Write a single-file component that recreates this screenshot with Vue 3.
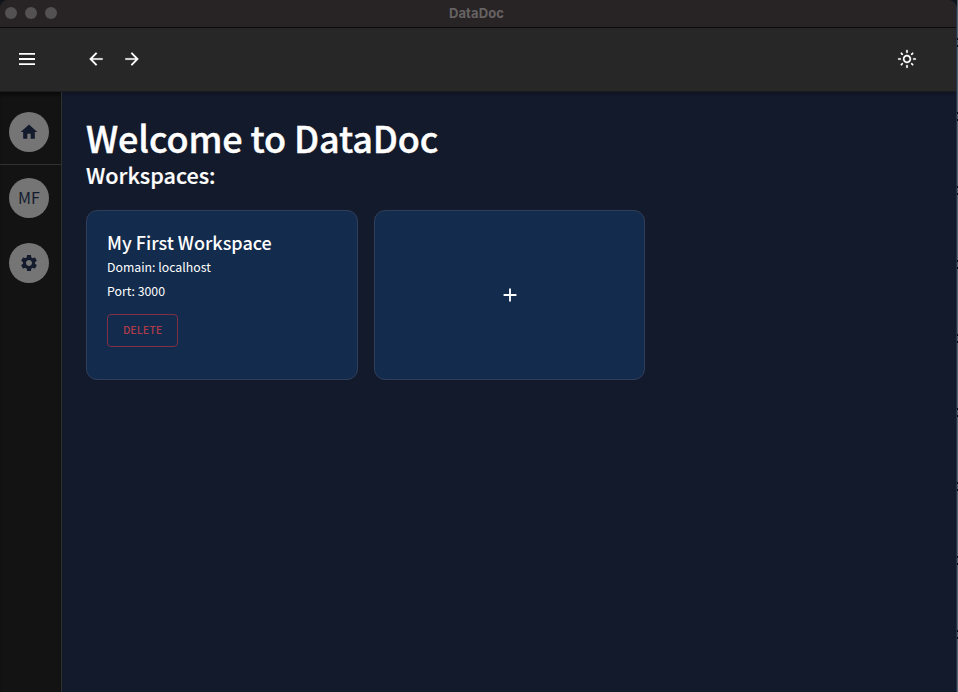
<script setup>
const workspaces = [{ name: 'My First Workspace', domain: 'localhost', port: 3000 }]
</script>

<template>
  <div class="desktop">
    <div class="window">
      <header class="titlebar">
        <div class="lights"><i></i><i></i><i></i></div>
        <span class="app-name">DataDoc</span>
      </header>
      <nav class="toolbar">
        <button class="icon-btn menu" aria-label="Menu">
          <svg viewBox="0 0 24 24" class="icon"><path d="M4 18h16v-1.7H4zm0-5.1h16v-1.8H4zM4 6v1.7h16V6z" /></svg>
        </button>
        <button class="icon-btn" aria-label="Back">
          <svg viewBox="0 0 24 24" class="icon"><path d="M20 11H7.83l5.59-5.59L12 4l-8 8 8 8 1.41-1.41L7.83 13H20z" /></svg>
        </button>
        <button class="icon-btn forward" aria-label="Forward">
          <svg viewBox="0 0 24 24" class="icon"><path d="m12 4-1.41 1.41L16.17 11H4v2h12.17l-5.58 5.59L12 20l8-8z" /></svg>
        </button>
        <button class="icon-btn theme" aria-label="Theme">
          <svg viewBox="0 0 24 24" class="icon"><path d="M12 9c1.65 0 3 1.35 3 3s-1.35 3-3 3-3-1.35-3-3 1.35-3 3-3m0-2c-2.76 0-5 2.24-5 5s2.24 5 5 5 5-2.24 5-5-2.24-5-5-5M2 13h2c.55 0 1-.45 1-1s-.45-1-1-1H2c-.55 0-1 .45-1 1s.45 1 1 1m18 0h2c.55 0 1-.45 1-1s-.45-1-1-1h-2c-.55 0-1 .45-1 1s.45 1 1 1M11 2v2c0 .55.45 1 1 1s1-.45 1-1V2c0-.55-.45-1-1-1s-1 .45-1 1m0 18v2c0 .55.45 1 1 1s1-.45 1-1v-2c0-.55-.45-1-1-1s-1 .45-1 1M5.99 4.58c-.39-.39-1.03-.39-1.41 0-.39.39-.39 1.03 0 1.41l1.06 1.06c.39.39 1.03.39 1.41 0s.39-1.03 0-1.41zm12.37 12.37c-.39-.39-1.03-.39-1.41 0-.39.39-.39 1.03 0 1.41l1.06 1.06c.39.39 1.03.39 1.41 0 .39-.39.39-1.03 0-1.41zm1.06-10.96c.39-.39.39-1.03 0-1.41-.39-.39-1.03-.39-1.41 0l-1.06 1.06c-.39.39-.39 1.03 0 1.41s1.03.39 1.41 0zM7.05 18.36c.39-.39.39-1.03 0-1.41-.39-.39-1.03-.39-1.41 0l-1.06 1.06c-.39.39-.39 1.03 0 1.41s1.03.39 1.41 0z" /></svg>
        </button>
      </nav>
      <div class="body">
        <aside class="sidebar">
          <div class="side-item home">
            <div class="avatar"><svg viewBox="0 0 24 24" class="glyph"><path d="M10 20v-6h4v6h5v-8h3L12 3 2 12h3v8z" /></svg></div>
          </div>
          <div class="side-item"><div class="avatar">MF</div></div>
          <div class="side-item">
            <div class="avatar"><svg viewBox="0 0 24 24" class="glyph"><path d="M19.14 12.94c.04-.3.06-.61.06-.94 0-.32-.02-.64-.07-.94l2.03-1.58c.18-.14.23-.41.12-.61l-1.92-3.32c-.12-.22-.37-.29-.59-.22l-2.39.96c-.5-.38-1.03-.7-1.62-.94l-.36-2.54c-.04-.24-.24-.41-.48-.41h-3.84c-.24 0-.43.17-.47.41l-.36 2.54c-.59.24-1.13.57-1.62.94l-2.39-.96c-.22-.08-.47 0-.59.22L2.74 8.87c-.12.21-.08.47.12.61l2.03 1.58c-.05.3-.09.63-.09.94s.02.64.07.94l-2.03 1.58c-.18.14-.23.41-.12.61l1.92 3.32c.12.22.37.29.59.22l2.39-.96c.5.38 1.03.7 1.62.94l.36 2.54c.05.24.24.41.48.41h3.84c.24 0 .44-.17.47-.41l.36-2.54c.59-.24 1.13-.56 1.62-.94l2.39.96c.22.08.47 0 .59-.22l1.92-3.32c.12-.22.07-.47-.12-.61zM12 15.6c-1.98 0-3.6-1.62-3.6-3.6s1.62-3.6 3.6-3.6 3.6 1.62 3.6 3.6-1.62 3.6-3.6 3.6" /></svg></div>
          </div>
        </aside>
        <main class="content">
          <h1>Welcome to DataDoc</h1>
          <h2>Workspaces:</h2>
          <section class="cards">
            <article v-for="w in workspaces" :key="w.name" class="card">
              <h3>{{ w.name }}</h3>
              <p>Domain: {{ w.domain }}</p>
              <p>Port: {{ w.port }}</p>
              <button class="delete">DELETE</button>
            </article>
            <article class="card add">
              <svg viewBox="0 0 24 24" class="plus"><path d="M19 13h-6v6h-2v-6H5v-2h6V5h2v6h6z" /></svg>
            </article>
          </section>
        </main>
      </div>
    </div>
    <div class="backdrop"></div>
  </div>
</template>

<style>
body { margin: 0; background: #000; }
</style>

<style scoped>
* { box-sizing: border-box; }
.desktop {
  display: flex;
  width: 958px;
  height: 692px;
  overflow: hidden;
  background: #10151b;
  font-family: "Noto Sans CJK SC", "Noto Sans", sans-serif;
  color: #fff;
}
.window {
  width: 957px;
  height: 692px;
  display: flex;
  flex-direction: column;
  overflow: hidden;
  border-right: 1px solid #26344b;
  border-radius: 8px 9px 0 0;
  background: #131a2b;
}
.backdrop {
  width: 1px;
  background: repeating-linear-gradient(#59636b 0 38px, #0a0e14 38px 40px, #59636b 40px 45px, #0a0e14 45px 47px, #59636b 47px 74px);
}
.titlebar {
  display: grid;
  grid-template-columns: 1fr auto 1fr;
  align-items: center;
  height: 28px;
  flex: none;
  padding: 0 8px 2px 5px;
  background: #282425;
  border-bottom: 1px solid #0c0c0c;
}
.lights { display: flex; gap: 8px; }
.lights i { width: 12px; height: 12px; border-radius: 50%; background: #535152; }
.app-name {
  font: 700 13px/18px Inter, sans-serif;
  letter-spacing: 0.1px;
  color: #666263;
}
.toolbar {
  display: flex;
  align-items: center;
  height: 64px;
  flex: none;
  padding: 0 39px 1px 15px;
  background: #272727;
  border-bottom: 1px solid #1b1c20;
}
.icon-btn { display: flex; padding: 0; border: 0; background: none; color: #fff; }
.icon { width: 20px; height: 20px; margin-bottom: 1px; fill: currentColor; stroke: currentColor; stroke-width: 0.2; }
.menu { margin-right: 47px; }
.menu .icon { width: 24px; height: 24px; margin-bottom: 0; stroke: none; }
.forward { margin-left: 16px; }
.theme { margin-left: auto; }
.body { display: flex; flex: 1; min-height: 0; }
.sidebar {
  width: 62px;
  flex: none;
  background: #131313;
  border-right: 1px solid #303030;
  box-shadow: inset 0 4px 3px -1px #0b0b0b;
}
.side-item { display: flex; padding: 12px 9px; }
.side-item:last-child { padding-top: 12.5px; }
.home { padding-top: 20px; border-bottom: 1px solid #303030; height: 73px; }
.avatar {
  display: flex;
  align-items: center;
  justify-content: center;
  width: 40px;
  height: 40px;
  border-radius: 50%;
  background: #757575;
  color: #141b2d;
  font-size: 16px;
  line-height: 38px;
}
.home + .side-item .avatar { padding-bottom: 2px; }
.home + .side-item { padding-top: 13px; }
.glyph { width: 20px; height: 20px; fill: currentColor; }
.content {
  flex: 1;
  padding: 22px 24px;
  box-shadow: inset 0 4px 3px -2px #101522;
}
h1, h2, h3, p { margin: 0; white-space: nowrap; }
h1 { font-size: 36px; line-height: 46px; font-weight: 500; letter-spacing: -0.13px; -webkit-text-stroke: 0.4px #fff; }
h2 { margin-top: 2px; font-size: 21.6px; line-height: 26px; font-weight: 500; -webkit-text-stroke: 0.2px #fff; }
.cards { display: flex; gap: 16px; margin-top: 21.5px; }
.card {
  width: 271.7px;
  height: 170px;
  padding: 18.5px 20px;
  border: 1px solid #303e5a;
  border-radius: 11px;
  background: #132b4c;
}
h3 { font-size: 18px; line-height: 26px; font-weight: 500; }
.card p { font-size: 12.3px; line-height: 24px; }
.delete {
  display: block;
  width: 71px;
  height: 33px;
  margin-top: 10.5px;
  padding: 0;
  border: 1px solid #803047;
  border-radius: 4px;
  background: none;
  color: #ad3b4b;
  font: 500 10.7px/30px "Noto Sans CJK SC", sans-serif;
}
.add { display: flex; align-items: center; justify-content: center; }
.plus { width: 22px; height: 22px; fill: #fff; }
</style>
